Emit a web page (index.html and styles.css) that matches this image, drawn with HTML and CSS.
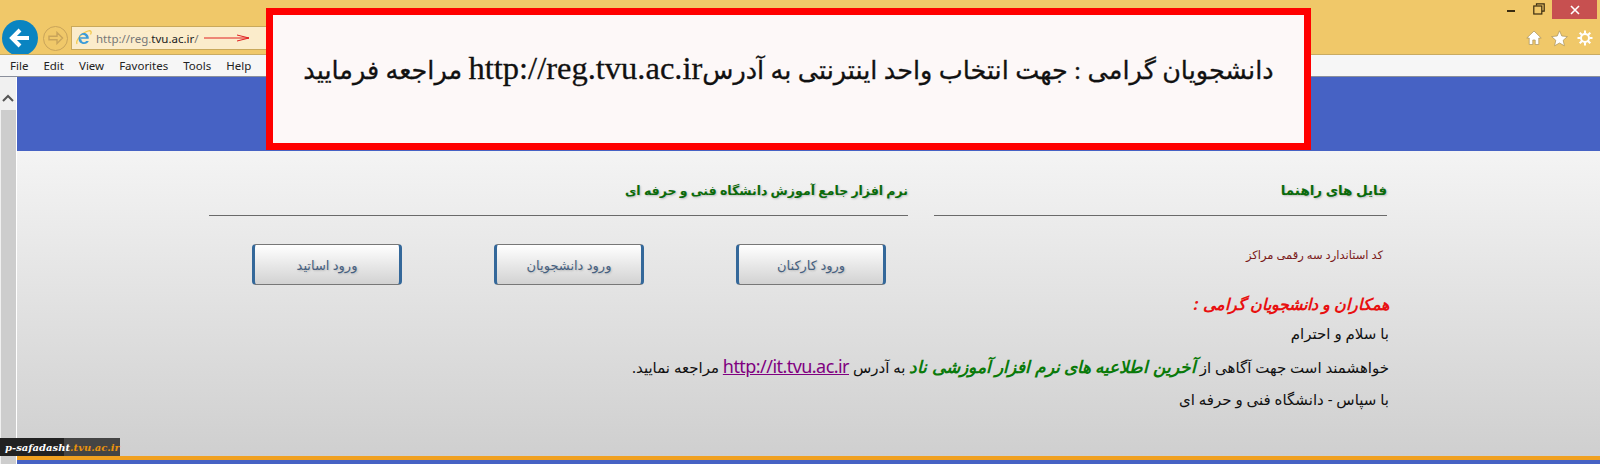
FILE: index.html
```html
<!DOCTYPE html>
<html lang="fa">
<head>
  <meta charset="UTF-8" />
  <meta name="viewport" content="width=device-width, initial-scale=1.0" />
  <title>نرم افزار جامع آموزش</title>
  <link rel="stylesheet" href="styles.css">
</head>
<body>
  <header class="chrome">
    <div class="caption">
      <span class="win-btn"><svg width="10" height="4"><rect x="1" y="1" width="8" height="2" fill="#3a2c10"/></svg></span>
      <span class="win-btn win-restore"><svg width="12" height="12" fill="none" stroke="#3a2c10" stroke-width="1.2"><path d="M3.5 2.5V.8h7.7v7.4H9"/><rect x=".8" y="3" width="8" height="8"/></svg></span>
      <span class="win-close"><svg width="10" height="10" stroke="#fff" stroke-width="1.6"><path d="M1 1l8 8M9 1l-8 8"/></svg></span>
    </div>
    <div class="toolbar">
      <span class="back"><svg width="24" height="22" fill="none" stroke="#fff" stroke-width="4"><path d="M21 11H4M12 3l-8 8 8 8"/></svg></span>
      <span class="forward"><svg width="16" height="14" fill="none" stroke="#c9a45a" stroke-width="1.4"><path d="M1 5.2h8V1.5L14.5 7 9 12.500V8.800H1z"/></svg></span>
      <div class="address">
        <svg width="18" height="18" viewBox="0 0 18 18" fill="none">
          <path d="M2 15C.5 12 6 4 13 2c3-.9 4 1 2.500 3.500" stroke="#f2c94c" stroke-width="1.300"/>
          <path d="M4.500 9.800h9.300C14 6.500 12 4 9 4 6.200 4 4 6 3.600 9c-.4 3.700 2.200 6 5.400 6 2.300 0 4-1 4.800-3h-2.700c-.5.800-1.200 1.200-2.100 1.200-1.500 0-2.500-1.100-2.500-2.800zm0-1.500C4.800 6.800 6 5.800 7.800 5.800c1.700 0 3 1 3.200 2.500z" fill="#3b9bd9" fill-rule="evenodd"/>
        </svg>
        <span class="url">http://reg.<b>tvu.ac.ir</b>/</span>
        <svg class="url-arrow" width="46" height="8" fill="none" stroke="#e02020"><path d="M0 4h45M33 1l12 3-12 3"/></svg>
      </div>
      <div class="tools">
        <svg width="16" height="16" viewBox="0 0 16 16" fill="#fff" stroke="#a8905a" stroke-width=".7"><path d="M8 1L.8 8h2.400v6.500h3.600V10h2.400v4.500h3.600V8h2.400z"/></svg>
        <svg width="17" height="17" viewBox="0 0 17 17" fill="#fff" stroke="#a8905a" stroke-width=".7"><path d="M8.500.8l2.300 5.200 5.600.6-4.200 3.700 1.200 5.500-4.900-2.800-4.900 2.800 1.200-5.500L.6 6.600l5.600-.6z"/></svg>
        <svg width="16" height="16" viewBox="0 0 16 16" fill="none" stroke="#fff" stroke-width="2"><circle cx="8" cy="8" r="4"/><path d="M8 .5v3M8 12.500v3M.5 8h3M12.500 8h3M2.700 2.700l2.100 2.100M11.200 11.200l2.100 2.100M13.300 2.700l-2.100 2.100M4.800 11.200l-2.100 2.100"/></svg>
      </div>
    </div>
  </header>

  <nav class="menubar">
    <span>File</span><span>Edit</span><span>View</span><span>Favorites</span><span>Tools</span><span>Help</span>
  </nav>

  <div class="viewport">
    <div class="scrollbar">
      <span class="scroll-up"><svg width="12" height="8" fill="none" stroke="#555" stroke-width="2"><path d="M1 7l5-5 5 5"/></svg></span>
      <span class="scroll-thumb"></span>
    </div>
    <div class="page">
      <div class="banner"></div>
      <main class="content">
        <section class="guide">
          <h2 class="col-title col-title-guide">فایل های راهنما</h2>
          <a class="guide-link" href="#">کد استاندارد سه رقمی مراکز</a>
        </section>
        <section class="login">
          <h2 class="col-title">نرم افزار جامع آموزش دانشگاه فنی و حرفه ای</h2>
          <div class="login-btns">
            <button class="login-btn">ورود کارکنان</button>
            <button class="login-btn">ورود دانشجویان</button>
            <button class="login-btn">ورود اساتید</button>
          </div>
        </section>
        <section class="notice">
          <p class="notice-title">همکاران و دانشجویان گرامی :</p>
          <p>با سلام و احترام</p>
          <p>خواهشمند است جهت آگاهی از <em class="hl">آخرین اطلاعیه های نرم افزار آموزشی ناد</em> به آدرس <a class="notice-link" href="#">http://it.tvu.ac.ir</a> مراجعه نمایید.</p>
          <p>با سپاس - دانشگاه فنی و حرفه ای</p>
        </section>
      </main>
      <div class="foot-bar"></div>
    </div>
  </div>

  <div class="alert">
    <p>دانشجویان گرامی : جهت انتخاب واحد اینترنتی به آدرس<span class="alert-url">http://reg.tvu.ac.ir</span> مراجعه فرمایید</p>
  </div>

  <div class="badge"><span class="badge-dark">p-safadasht</span><span class="badge-domain">.tvu.ac.ir</span></div>
</body>
</html>
```

FILE: styles.css
```css
* { box-sizing: border-box; }
html, body { height: 100%; }
body { margin: 0; height: 464px; overflow: hidden; display: flex; flex-direction: column; font-family: "Noto Sans", "DejaVu Sans", sans-serif; background: #f6f6f6; }

/* browser frame */
.chrome { height: 55px; background: #f0c869; border-bottom: 1px solid #c9ab62; overflow: hidden; }
.caption { height: 19px; display: flex; justify-content: flex-end; align-items: center; padding-right: 3px; }
.win-btn { display: flex; justify-content: center; width: 26px; margin-top: 3px; }
.win-restore { margin: -1px 0 0 2px; }
.win-close { width: 45px; height: 19px; background: #c75050; display: flex; align-items: center; justify-content: center; }
.toolbar { height: 35px; display: flex; align-items: center; padding: 3px 7px 0 2px; }
.back { width: 36px; height: 36px; flex: none; border-radius: 50%; background: #0a84c1; display: flex; align-items: center; justify-content: center; }
.forward { width: 25px; height: 25px; flex: none; margin-left: 5px; border-radius: 50%; border: 1px solid #c9a45a; display: flex; align-items: center; justify-content: center; }
.address { width: 300px; height: 24px; margin-left: 3px; display: flex; align-items: center; gap: 3px; padding-left: 3px; background: #fbeccb; border: 1px solid #c9a95b; }
.url { font-size: 11.500px; color: #777; }
.url b { font-weight: normal; color: #222; }
.url-arrow { margin-left: 2px; }
.tools { margin-left: auto; display: flex; align-items: center; gap: 9px; }

.menubar { height: 22px; display: flex; align-items: center; gap: 15px; padding-left: 10px; background: #f6f6f6; border-bottom: 1px solid #8a8f9c; font-size: 11.500px; color: #222; }

/* page */
.viewport { flex: 1; display: flex; min-height: 0; }
.scrollbar { width: 17px; flex: none; display: flex; flex-direction: column; background: #f0f0f0; border-right: 1px solid #fff; }
.scroll-up { height: 33px; display: flex; justify-content: center; padding-top: 17px; }
.scroll-thumb { flex: 1; margin-left: 1px; background: #cdcdcd; }
.page { flex: 1; display: flex; flex-direction: column; min-width: 0; }
.banner { height: 74px; background: #4662c4; }
.content { flex: 1; direction: rtl; display: grid; grid-template-columns: 453px 699px; grid-template-rows: 140px auto; column-gap: 26px; align-content: start; padding: 0 213px 0 0; background: linear-gradient(#f4f4f4, #cfcfcf); }
.foot-bar { height: 8px; background: #4662c4; border-top: 4px solid #f0a020; }

.col-title { margin: 0; height: 65px; padding: 31px 0 0; border-bottom: 1px solid #6a6a6a; font-size: 12.500px; font-weight: bold; color: #0a6a0a; text-shadow: 1px 1px 2px #bbb; }
.col-title-guide { font-size: 13.500px; padding-top: 30px; }
.guide-link { display: block; margin: 31px 4px 0 0; font-size: 11.500px; color: #7a1a1a; text-decoration: none; }
.login-btns { display: flex; gap: 92px; padding: 28px 22px 0 0; }
.login-btn { width: 150px; height: 41px; font: 13px "Noto Sans", "DejaVu Sans", sans-serif; color: #46607f; text-shadow: 1px 1px 2px #bbb; background: linear-gradient(#fff, #d2d2d2); border: 1px solid #777; border-left: 3px solid #34689a; border-right: 3px solid #34689a; border-radius: 4px; }

.notice { grid-column: 1 / -1; margin-right: -2px; font-size: 15px; color: #111; }
.notice p { margin: 0; height: 33px; line-height: 33px; white-space: nowrap; }
.notice .notice-title { height: 26px; line-height: 26px; color: #e81010; font-weight: bold; font-style: italic; font-size: 16px; }
.hl { color: #0a7a0a; font-weight: bold; font-size: 17px; }
.notice-link { font-size: 18px; letter-spacing: -.55px; color: #800080; }

/* over the page */
.alert { position: absolute; left: 266px; top: 8px; width: 1045px; height: 142px; display: flex; align-items: center; justify-content: center; padding-bottom: 22px; direction: rtl; background: #fdf8f8; border: 7px solid #f00; }
.alert p { margin: 0; font: 25.500px "Liberation Serif", "DejaVu Sans", serif; color: #111; white-space: nowrap; -webkit-text-stroke: .3px #111; }
.alert-url { font-size: 32.500px; }
.badge { position: absolute; left: 0; top: 438px; width: 120px; height: 18px; display: flex; align-items: center; padding-left: 5px; white-space: nowrap; background: linear-gradient(90deg, #222 64px, #444 64px); font: italic bold 10px "DejaVu Serif", serif; }
.badge-dark { color: #fff; }
.badge-domain { color: #e8920c; }
```
